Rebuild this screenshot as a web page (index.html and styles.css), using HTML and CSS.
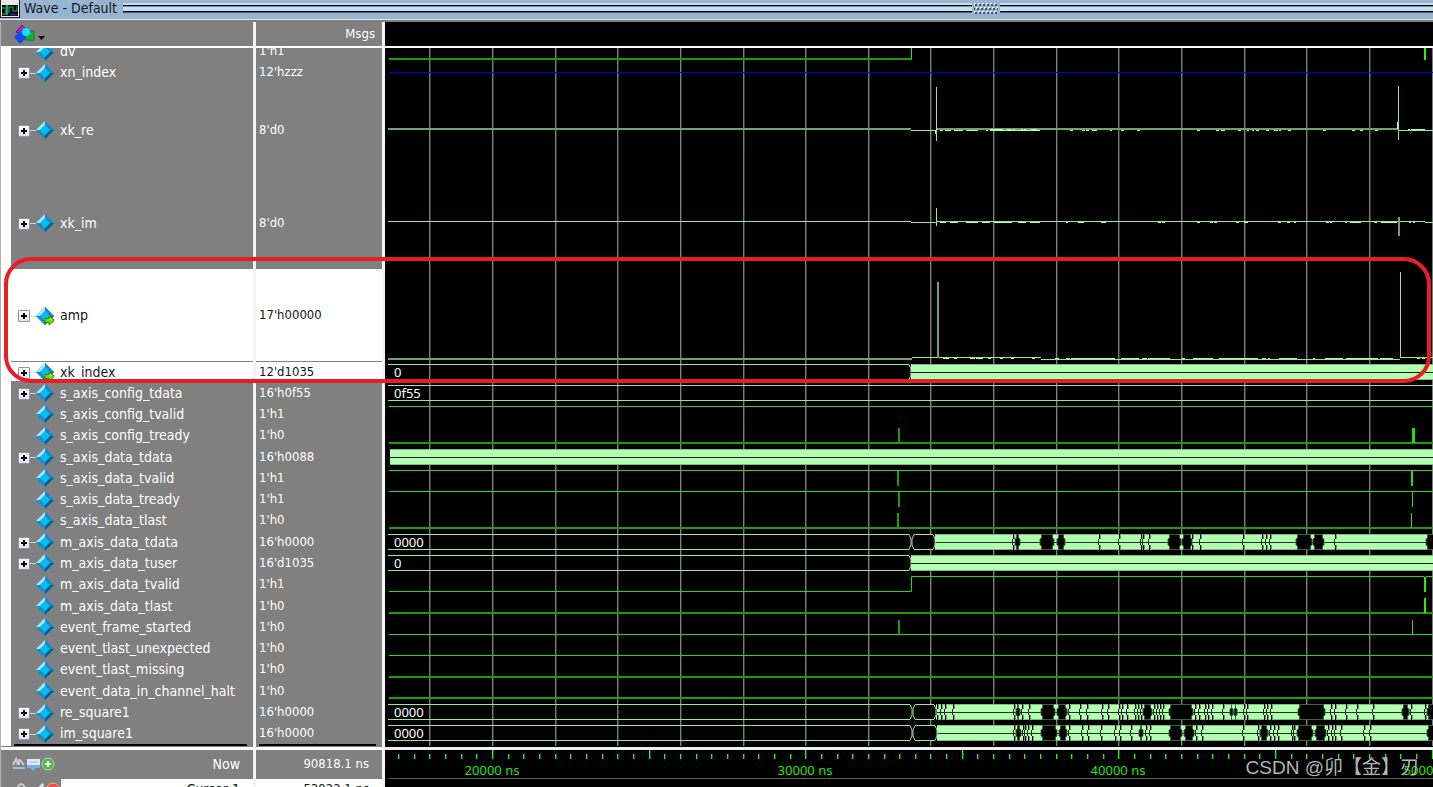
FILE: index.html
```html
<!DOCTYPE html>
<html lang="en">
<head>
<meta charset="utf-8">
<title>Wave - Default</title>
<link rel="stylesheet" href="styles.css">
</head>
<body>
<svg class="defs" aria-hidden="true">
  <symbol id="gem" viewBox="0 0 18 18">
    <path d="M9 0L18 9L9 18L0 9Z" fill="#1495cf"/>
    <path d="M9 0L0 9L4 9L9 4Z" fill="#a9e9fb"/>
    <path d="M9 0L18 9L14 9L9 4Z" fill="#1a86c4"/>
    <path d="M0 9L9 18L9 14L4 9Z" fill="#0f8fd0"/>
    <path d="M18 9L9 18L9 14L14 9Z" fill="#075f86"/>
    <path d="M9 4L14 9L9 14L4 9Z" fill="#08bdf5"/>
  </symbol>
  <symbol id="gem-out" viewBox="0 0 18 18">
    <use href="#gem" width="18" height="18"/>
    <path d="M9 11.500H13V8.500L18.500 13.500L13 18V15.500H9Z" fill="#6be000" stroke="#2f8a00" stroke-width="1"/>
    <path d="M10 12.500H14V11L16 13Z" fill="#e6f53a"/>
  </symbol>
</svg>
<header class="titlebar">
  <svg class="app-icon" viewBox="0 0 20 18" aria-hidden="true">
    <rect width="20" height="18" fill="#222"/><rect x="1" width="18" height="17" fill="#e8e8e8"/>
    <rect x="2" y="5" width="16" height="11" fill="#000"/>
    <path d="M2 8H6V14H2M9 13V7H13V11H17V7" fill="none" stroke="#0c8a3c" stroke-width="1.500"/>
    <path d="M7 5V15" stroke="#18c8c0" stroke-width="1.500"/><path d="M10 14.500H17" stroke="#3322aa" stroke-width="2"/>
  </svg>
  <h1>Wave - Default</h1>
  <div class="stripes stripes-long"></div>
  <svg class="grip" viewBox="0 0 24 12" aria-hidden="true"><defs><pattern id="dots" width="4" height="8" patternUnits="userSpaceOnUse"><path d="M0 1h2M2 5h2" stroke="#e4f2fc" stroke-width="2"/><path d="M1 2h2M3 6h1M0 6h1" stroke="#46566a" stroke-width="2"/></pattern></defs><rect width="24" height="12" fill="url(#dots)"/></svg>
  <div class="stripes stripes-short"></div>
</header>
<main class="wave-window">
  <section class="names">
    <div class="head">
      <button class="filter" aria-label="Signal filter"><svg viewBox="0 0 34 22" width="34" height="22">
        <path d="M3 9L9 2L15 8L12 11L9 7L6 10Z" fill="#c01ad0" stroke="#70107c" stroke-width="1"/>
        <path d="M12 8H21V17H12Z" fill="#19b040" stroke="#0d7a2c"/>
        <path d="M7 8L14 14L7 21L1 14Z" fill="#0d4bea"/><circle cx="13" cy="9" r="4" fill="#0ae4fa"/>
        <path d="M25 13H32L28.500 17Z" fill="#000"/></svg></button>
    </div>
    <ul class="signals tree" id="names"></ul>
    <div class="foot">
      <div class="foot-now"><svg width="46" height="18" viewBox="0 0 46 18" aria-hidden="true">
        <path d="M1 10L4 4L6 10M7 4V10M8 5L12 10" stroke="#ccc" stroke-width="2" fill="none"/><path d="M1 13H13" stroke="#9ac0e8" stroke-width="2"/>
        <rect x="15" y="4" width="13" height="9" fill="#dfe9f8"/><path d="M15 10H28V13H24L21 16L18 13H15Z" fill="#7ea9e6"/><path d="M17 7H26" stroke="#9db6dc"/>
        <circle cx="36" cy="9" r="6" fill="#53b648" stroke="#a6dd9c"/><path d="M36 6V12M33 9H39" stroke="#fff" stroke-width="2"/></svg>
        <span>Now</span></div>
      <div class="foot-cursor"><svg width="50" height="18" viewBox="0 0 50 18" aria-hidden="true">
        <path d="M6 10V7Q9 1 13 7V10" fill="none" stroke="#ccc" stroke-width="2"/><rect x="4" y="8" width="13" height="9" fill="#d9a640"/>
        <path d="M22 14L32 4M26 8L30 12" stroke="#d8e2ee" stroke-width="3"/>
        <circle cx="42" cy="10" r="7" fill="#e4524a" stroke="#f3a59e"/><path d="M39 10H45" stroke="#fff" stroke-width="2"/></svg>
        <span>Cursor 1</span></div>
    </div>
  </section>
  <section class="values">
    <div class="head"><span>Msgs</span></div>
    <ul class="signals" id="values"></ul>
    <div class="foot">
      <div class="foot-now"><span>90818.1 ns</span></div>
      <div class="foot-cursor"><span>53922.1 ns</span></div>
    </div>
  </section>
  <section class="waves">
    <div class="head"></div>
    <svg class="plot" id="plot" role="img" aria-label="Waveforms"></svg>
    <svg class="timeline" id="timeline" role="img" aria-label="Time axis"></svg>
  </section>
  <div class="highlight"></div>
  <p class="watermark">CSDN @卯【金】刃</p>
</main>
<script src="wave.js"></script>
</body>
</html>
```
FILE: styles.css
```css
* { box-sizing: border-box; }
body {
  margin: 0;
  height: 100vh;
  display: flex;
  flex-direction: column;
  overflow: hidden;
  background: #000;
  color: #fff;
  font: 13px/20px "DejaVu Sans Condensed", "Noto Sans", sans-serif;
}
.defs { position: absolute; width: 0; height: 0; }
.titlebar {
  display: flex;
  align-items: flex-start;
  height: 22px;
  flex: none;
  background: #99b4d1;
  border-bottom: 2px solid #808080;
  box-shadow: inset 0 -1px #e4e4e4;
  color: #101820;
}
.app-icon { width: 20px; height: 18px; flex: none; }
.titlebar h1 { margin: 0 6px 0 4px; font-size: 14px; font-weight: 400; line-height: 17px; white-space: nowrap; }
.stripes {
  height: 11px;
  margin-top: 3px;
  background: linear-gradient(#bfe3f5 2px, #000 2px 3px, #6e93a2 3px 4px, #bfe3f5 4px 8px, #000 8px 9px, #4a6270 9px 10px, #99b4d1 10px);
}
.stripes-long { flex: 849 1 0; }
.stripes-short { flex: 433 1 0; }
.grip { width: 24px; height: 12px; margin: 3px 2px 0; flex: none; }
.wave-window { position: relative; flex: 1; display: flex; min-height: 0; }
.names, .values, .waves { display: flex; flex-direction: column; min-width: 0; }
.names, .values { flex: none; background: #808080; border-right: 3px solid #f4f4f4; }
.names { width: 256px; border-left: 1px solid #b0b0b0; font-size: 14px; }
.values { width: 129px; }
.waves { flex: 1; background: #000; }
.head {
  height: 26px;
  flex: none;
  display: flex;
  align-items: center;
  border-bottom: 2px solid #fff;
}
.values .head { justify-content: flex-end; padding-right: 7px; }
.filter { border: 0; padding: 0; margin-left: 12px; background: none; height: 22px; }
.filter svg { display: block; }
.signals {
  list-style: none;
  margin: 0;
  padding: 0;
  height: 698px;
  flex: none;
  display: grid;
  grid-template-rows: 13px 22px 93px 93px 93px 20px repeat(17, 1fr) 2px;
  overflow: hidden;
}
.tree { border-left: 10px solid #fff; padding-left: 0; }
.signals li { display: flex; align-items: center; min-height: 0; white-space: pre; }
.signals li:first-child { align-items: flex-end; overflow: hidden; }
.tree li { padding-left: 7px; }
.values .signals li { padding-left: 3px; }
.signals .selected { background: #fff; color: #101820; border-bottom: 1px solid #808080; }
.signals .end { background: #000; margin: 0 6px 0 3px; }
.expand {
  width: 12px;
  height: 12px;
  margin: 2px 0 0;
  padding: 0;
  border: 1px solid #8c93a8;
  border-radius: 1px;
  background: linear-gradient(#fff, #dfe3ee);
  flex: none;
}
.expand svg { display: block; }
.link { width: 6px; height: 1px; margin-top: 2px; background: #d8d8d8; flex: none; }
.leaf { width: 18px; flex: none; }
.gem { width: 18px; height: 18px; margin: 1px 6px 0 0; flex: none; }
.foot { flex: 1; border-top: 3px solid #fff; margin-top: 1px; overflow: hidden; }
.foot-now, .foot-cursor { display: flex; align-items: center; justify-content: space-between; }
.foot-now { height: 28px; padding: 0 13px 0 11px; }
.foot-cursor { height: 22px; padding: 0; }
.foot-cursor svg { padding-left: 11px; width: 60px; }
.foot-cursor span { flex: 1; background: #fff; color: #101820; text-align: right; padding-right: 13px; }
.values .foot-now, .values .foot-cursor { justify-content: flex-end; }
.plot { display: block; width: 100%; height: 698px; flex: none; }
.timeline { display: block; width: 100%; height: 41px; flex: 1; border-top: 3px solid #eee; margin-top: 1px; }
.plot text, .timeline text { font-family: "Noto Sans", sans-serif; font-size: 13px; fill: #fff; }
.timeline text { fill: #2fe012; text-anchor: middle; }
.highlight {
  position: absolute;
  left: 4px;
  right: 2px;
  top: 235px;
  height: 126px;
  border: 4px solid #ec1c24;
  border-radius: 27px;
  pointer-events: none;
}
.watermark {
  position: absolute;
  right: 14px;
  bottom: 4px;
  margin: 0;
  color: #b4b4b4;
  font: 19px/30px "Liberation Sans", "Noto Sans CJK SC", sans-serif;
  white-space: nowrap;
}
```
FILE: wave.js
```js
// [name, value, kind]: kind "+" is a bus, "o" a selected output bus
const signals = [
  ["dv", "1'h1"], ["xn_index", "12'hzzz", "+"], ["xk_re", "8'd0", "+"], ["xk_im", "8'd0", "+"],
  ["amp", "17'h00000", "o"], ["xk_index", "12'd1035", "o"],
  ["s_axis_config_tdata", "16'h0f55", "+"], ["s_axis_config_tvalid", "1'h1"], ["s_axis_config_tready", "1'h0"],
  ["s_axis_data_tdata", "16'h0088", "+"], ["s_axis_data_tvalid", "1'h1"], ["s_axis_data_tready", "1'h1"],
  ["s_axis_data_tlast", "1'h0"], ["m_axis_data_tdata", "16'h0000", "+"], ["m_axis_data_tuser", "16'd1035", "+"],
  ["m_axis_data_tvalid", "1'h1"], ["m_axis_data_tlast", "1'h0"], ["event_frame_started", "1'h0"],
  ["event_tlast_unexpected", "1'h0"], ["event_tlast_missing", "1'h0"], ["event_data_in_channel_halt", "1'h0"],
  ["re_square1", "16'h0000", "+"], ["im_square1", "16'h0000", "+"]
];
const plus = '<svg width="10" height="10" viewBox="0 0 10 10"><path d="M5 2V8M2 5H8" stroke="#000" stroke-width="2"/></svg>';
document.getElementById("names").innerHTML = signals.map(([n, , k]) =>
  `<li${k === "o" ? ' class="selected"' : ""}>` +
  (k ? `<button class="expand" aria-label="Expand ${n}">${plus}</button><i class="link"></i>` : '<i class="leaf"></i>') +
  `<svg class="gem"><use href="#gem${k === "o" ? "-out" : ""}" width="18" height="18"/></svg><span>${n}</span></li>`
).join("") + '<li class="end"></li>';
document.getElementById("values").innerHTML = signals.map(([, v, k]) =>
  `<li${k === "o" ? ' class="selected"' : ""}>${v}</li>`).join("") + '<li class="end"></li>';

const END = 4000, X0 = 389;
const DIM = "#1f9c06", LIT = "#2bd811", BUS = "#9be59b", FILL = "#b2ffb2", SOFT = "#6fa26f";
const out = [];
const box = (x, y, w, h, c) => out.push(`<rect x="${x}" y="${y}" width="${w}" height="${h}" fill="${c}"/>`);
const path = (d, c, f = "none") => out.push(`<path d="${d}" stroke="${c}" fill="${f}"/>`);
const text = (x, y, s) => out.push(`<text x="${x}" y="${y}">${s}</text>`);

for (let i = -1; i < 56; i++) {
  const x = Math.round(492 + i * 62.64);
  box(x, 48, 1, 698, "#7c7c7c");
  box(x + 1, 48, 1, 698, "#343434");
}

// single-bit signals
box(X0, 58, 523, 2, DIM); box(911, 48, 1, 11, "#27f000"); box(1424, 48, 2, 12, "#27f000");
box(X0, 72, END, 1, "#0000ee");
box(X0, 406, END, 1, LIT);
box(X0, 442, END, 2, DIM); box(898, 428, 2, 15, DIM); box(1412, 428, 3, 15, LIT);
box(X0, 470, END, 1, LIT); box(897, 471, 2, 15, DIM); box(1411, 471, 2, 15, LIT);
box(X0, 491, END, 1, LIT); box(898, 492, 2, 15, DIM); box(1412, 492, 1, 15, LIT);
box(X0, 527, END, 2, DIM); box(897, 513, 2, 15, DIM); box(1411, 513, 1, 15, LIT);
path("M389 591.5H911.5V576.5H1424M1426 576.5H4000", LIT); box(1424, 577, 2, 15, "#27f000");
box(X0, 612, END, 2, DIM); box(1424, 598, 2, 15, "#27f000");
box(X0, 634, END, 1, LIT); box(898, 620, 2, 14, DIM); box(1412, 620, 1, 14, LIT);
box(X0, 655, END, 1, LIT); box(X0, 676, END, 2, DIM); box(X0, 697, END, 2, DIM);

// analog traces
const blips = (y, list) => list.forEach(([a, b]) => box(a, y, b - a, 1, FILL));
box(388, 128, 523, 2, SOFT); box(911, 130, 26, 1, BUS); box(937, 128, 461, 2, SOFT); box(1399, 130, END, 1, BUS);
box(936, 87, 1, 54, "#9ee29e"); box(935, 130, 1, 4, FILL); box(1398, 86, 1, 54, BUS); box(1397, 122, 1, 7, FILL);
blips(130, [[940, 943], [945, 951], [954, 963], [966, 978], [986, 988], [1070, 1073], [1082, 1085], [1086, 1089], [1092, 1097], [1110, 1112], [1121, 1124], [1137, 1140], [1197, 1200], [1216, 1219], [1221, 1225], [1238, 1241], [1247, 1249], [1252, 1254], [1256, 1259], [1266, 1269], [1274, 1278], [1279, 1281], [1288, 1291], [1323, 1326], [1352, 1355], [1360, 1363], [1375, 1378], [990, 1040]]);
blips(129, [[990, 1003], [1007, 1011], [1013, 1015], [1021, 1023], [1024, 1026], [1031, 1037], [1408, 1410], [1411, 1425]]);
box(388, 221, 523, 1, BUS); box(911, 222, 25, 1, BUS); box(937, 221, 488, 1, BUS); box(1425, 222, END, 1, BUS);
box(936, 208, 1, 18, BUS); box(1398, 217, 2, 19, SOFT);
blips(222, [[940, 946], [950, 958], [966, 978], [982, 990], [994, 1012], [1018, 1026], [1030, 1040], [1066, 1068], [1078, 1084], [1101, 1106], [1158, 1161], [1162, 1165], [1197, 1200], [1210, 1213], [1214, 1217], [1236, 1239], [1244, 1248], [1278, 1281], [1287, 1290], [1294, 1296], [1326, 1329], [1330, 1332], [1345, 1347], [1350, 1361], [1374, 1377], [1381, 1397], [1409, 1411], [1413, 1415]]);
box(388, 358, 524, 2, SOFT); box(912, 357, 129, 1, BUS); box(1041, 359, 359, 1, BUS); box(1400, 357, END, 1, BUS);
box(937, 282, 2, 76, SOFT); box(1400, 272, 1, 86, "#9ee29e");
blips(358, [[943, 949], [954, 957], [970, 975], [976, 983], [988, 991], [1000, 1003], [1011, 1014], [1032, 1035], [1055, 1059], [1066, 1070], [1071, 1081], [1081, 1115], [1121, 1139], [1142, 1147], [1148, 1170], [1182, 1185], [1193, 1213], [1219, 1258], [1262, 1266], [1268, 1270], [1279, 1297], [1313, 1315], [1325, 1343], [1346, 1378], [1380, 1393], [1417, 1420], [1422, 1425]]);

// buses: solid activity from `from` on, with a label before it
function solid(top, from, label) {
  if (label !== undefined) {
    path(`M388 ${top + .5}H${from - 2}L${from} ${top + 5}V${top + 11}L${from - 2} ${top + 15.5}H388`, BUS);
    text(394, top + 13, label);
  }
  box(from, top, END, 16, FILL);
  box(from, top, END, 1, "#82b882"); box(from, top + 15, END, 1, "#82b882");
  box(from, top + 8, END, 1, "#101810");
}
function gap(a, b, top) {
  path(`M${a + 1.5} ${top + .5}H${b - 1.5}V${top + 4}L${b} ${top + 5}V${top + 11}L${b - 1.5} ${top + 12}V${top + 15.5}H${a + 1.5}V${top + 12}L${a} ${top + 11}V${top + 5}L${a + 1.5} ${top + 4}Z`, "#3c643c", "#000");
}
function bus(top, first, gaps, marks) {
  path(`M388 ${top + .5}H${first - 2}L${first} ${top + 5}V${top + 11}L${first - 2} ${top + 15.5}H388`, BUS);
  text(394, top + 13, "0000");
  box(gaps[0][1], top, END, 16, FILL);
  box(gaps[0][1], top, END, 1, "#82b882"); box(gaps[0][1], top + 15, END, 1, "#82b882");
  box(gaps[0][1], top + 8, END, 1, "#203420");
  marks.forEach(x => {
    box(x, top, 1, 5, "#000"); box(x, top + 11, 1, 5, "#000");
    box(x - 1, top + 5, 1, 6, "#16300f"); box(x - 4, top + 8, 5, 1, "#16300f");
    box(x + 1, top + 1, 1, 4, "#6a9a6a"); box(x + 1, top + 11, 1, 4, "#6a9a6a");
  });
  gaps.forEach(([a, b], i) => i ? gap(a, b, top)
    : path(`M${a + 3} ${top + .5}H${b - 2}L${b} ${top + 5}V${top + 11}L${b - 2} ${top + 15.5}H${a + 3}L${a + 1} ${top + 11}V${top + 5}Z`, BUS, "#000"));
}
solid(364, 911, "0");
box(388, 385, END, 1, BUS); box(388, 400, END, 1, BUS); text(394, 398, "0f55");
solid(449, 390);
bus(534, 911, [[911, 935], [1015, 1020], [1040, 1054], [1057, 1065], [1168, 1181], [1182, 1192], [1296, 1312], [1313, 1324], [1426, 1440]],
  [1013, 1099, 1119, 1141, 1143, 1149, 1192, 1200, 1243, 1262, 1266, 1270, 1335]);
solid(555, 911, "0");
bus(704, 912, [[912, 936], [1016, 1020], [1041, 1055], [1057, 1067], [1143, 1152], [1169, 1193], [1230, 1233], [1234, 1237], [1298, 1325], [1402, 1409], [1427, 1440]],
  [937, 941, 945, 953, 1014, 1022, 1029, 1069, 1080, 1087, 1102, 1108, 1119, 1122, 1127, 1135, 1138, 1141, 1154, 1157, 1160, 1163, 1195, 1199, 1205, 1208, 1212, 1223, 1244, 1247, 1264, 1267, 1271, 1331, 1335, 1346, 1357, 1373, 1411, 1425]);
bus(725, 912, [[912, 937], [1016, 1021], [1041, 1057], [1059, 1067], [1139, 1143], [1169, 1182], [1184, 1194], [1260, 1268], [1297, 1313], [1315, 1326], [1427, 1440]],
  [1014, 1023, 1025, 1028, 1032, 1069, 1082, 1088, 1101, 1115, 1120, 1131, 1146, 1150, 1196, 1202, 1243, 1258, 1270, 1274, 1278, 1292, 1294, 1328, 1332, 1335, 1341, 1364, 1370]);
document.getElementById("plot").innerHTML = `<g transform="translate(-385 -48)">${out.join("")}</g>`;

// time axis
out.length = 0;
for (let i = -6; i < 230; i++) {
  const x = Math.round(492 + i * 15.66), major = i % 10 === 0;
  box(x, major ? 0 : 4, 1, major ? 9 : 5, "#30f010");
  box(x + 1, major ? 0 : 4, 1, major ? 9 : 5, "#0f5a04");
}
for (let i = 0; i < 11; i++) text(Math.round(491.5 + i * 313.2), 25, `${20000 + i * 10000} ns`);
box(X0, 28, END, 1, "#606060");
document.getElementById("timeline").innerHTML = `<g transform="translate(-385 0)">${out.join("")}</g>`;
```
